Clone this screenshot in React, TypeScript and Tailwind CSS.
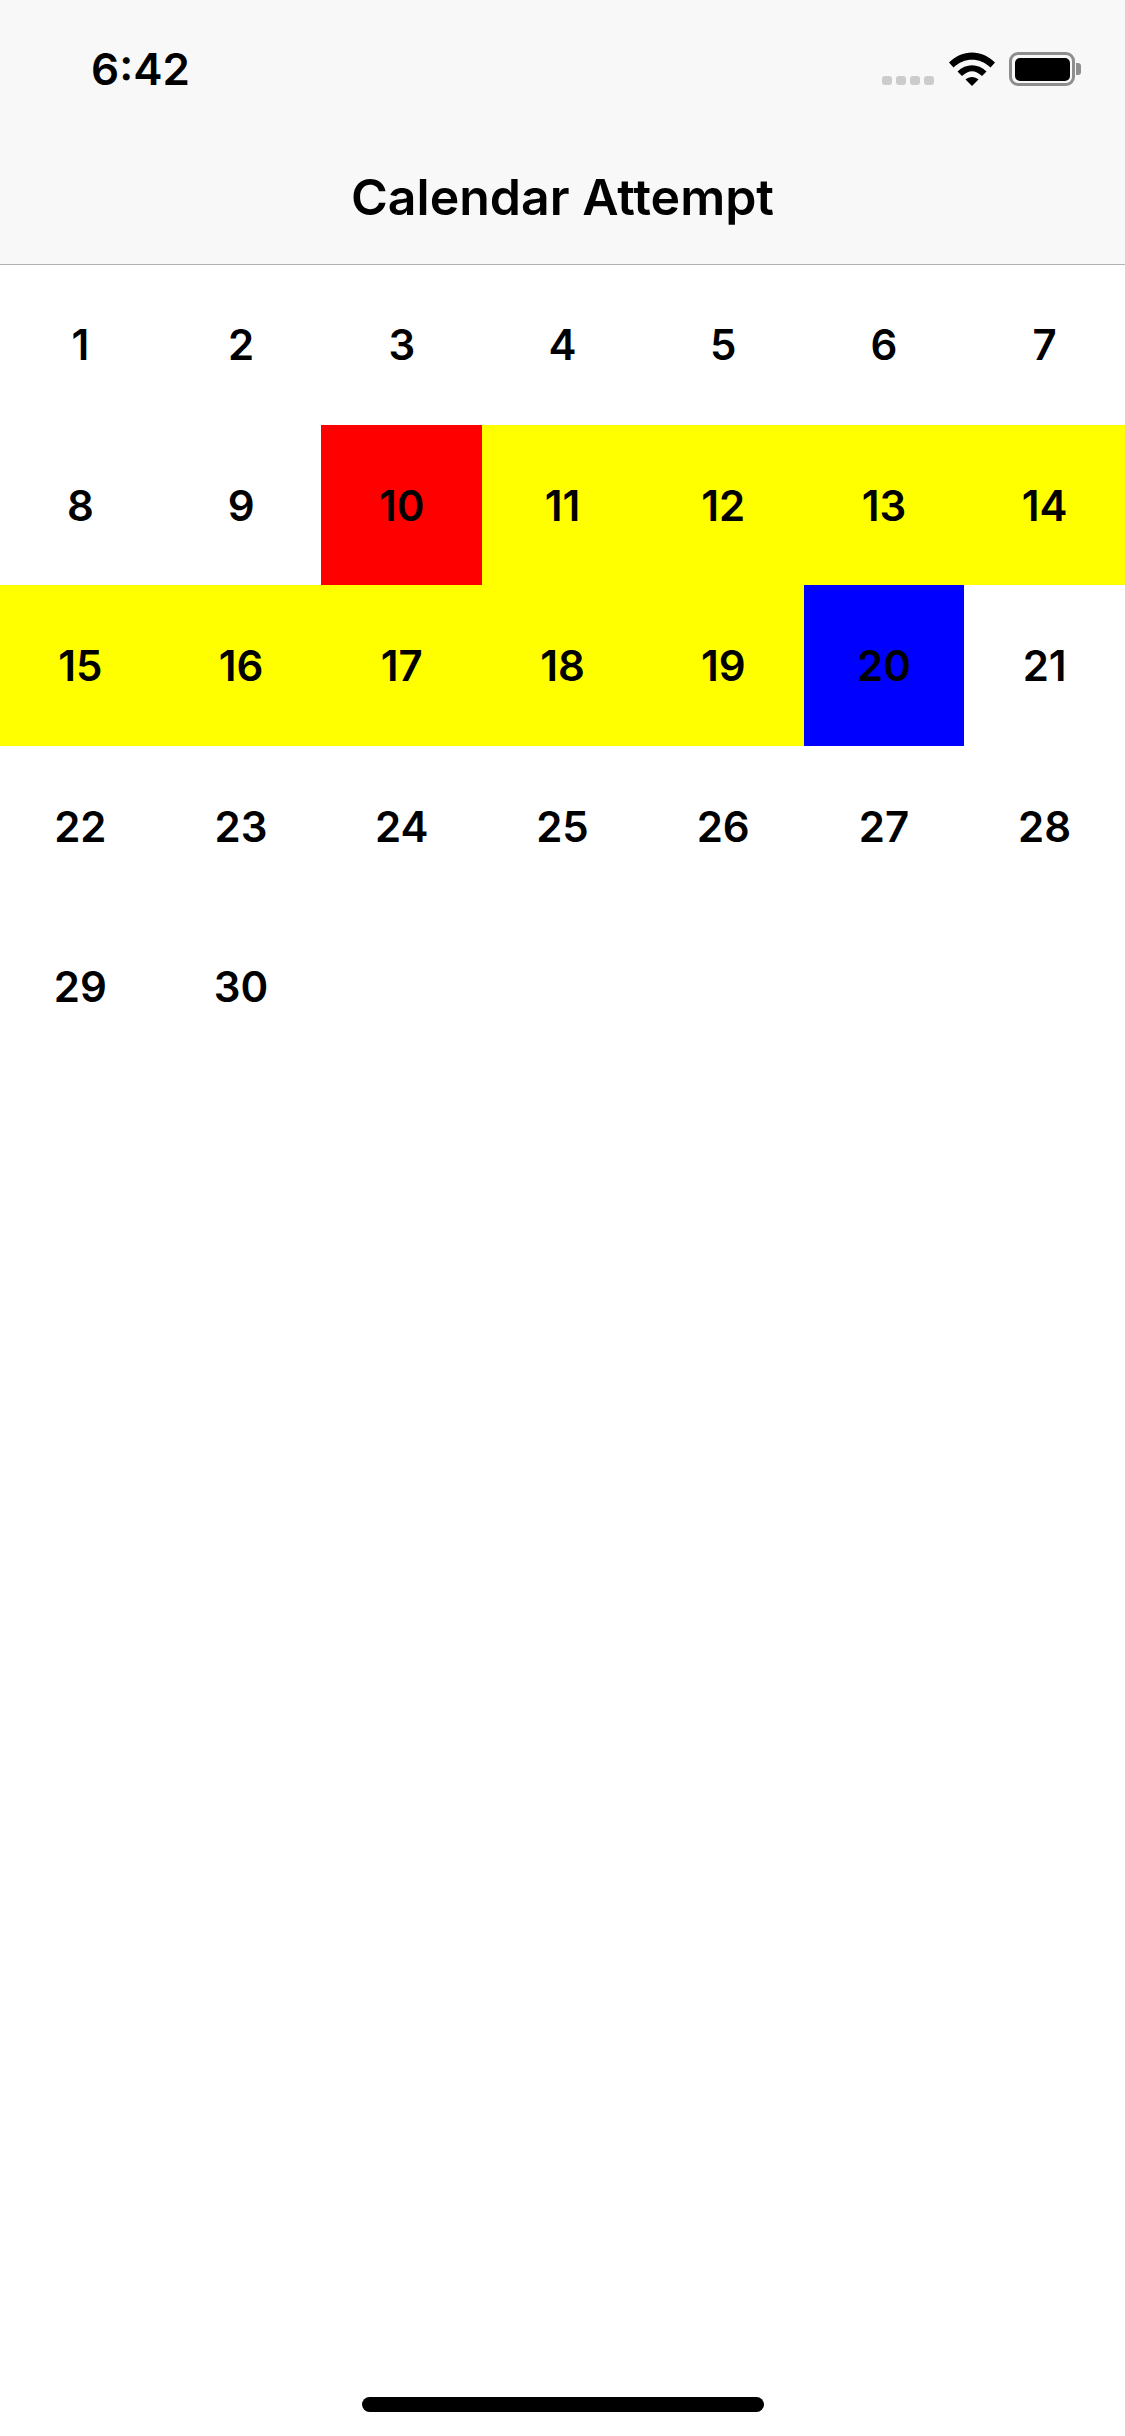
const days = Array.from({ length: 30 }, (_, i) => i + 1);

function dayColor(day: number) {
  if (day === 10) return "bg-[#ff0000]";
  if (day === 20) return "bg-[#0000ff]";
  if (day > 10 && day < 20) return "bg-[#ffff00]";
  return "";
}

function StatusIcons() {
  return (
    <div className="flex items-end">
      <div className="mb-[1px] flex gap-[4px]">
        {[0, 1, 2, 3].map((dot) => (
          <span key={dot} className="h-[9px] w-[10px] rounded-[3px] bg-[#cccccc]" />
        ))}
      </div>
      <svg className="ml-[15px]" width="46" height="34" viewBox="0 0 46 34">
        <path d="M0 10.5 C13 -3 33 -3 46 10.5 L41.5 15.5 C31 5 15 5 4.500 15.500 Z" fill="#000" />
        <path d="M8.500 19.500 C17 11 29 11 37.500 19.500 L33 24 C26 17.500 20 17.500 13 24 Z" fill="#000" />
        <path d="M16.500 27.500 C20 24 26 24 29.500 27.500 L23 34 Z" fill="#000" />
      </svg>
      <div className="ml-[14px] flex items-center">
        <div className="flex h-[34px] w-[66px] items-center justify-center rounded-[9px] border-[3px] border-[#8e8e8e]">
          <div className="h-[23px] w-[55px] rounded-[5px] bg-black" />
        </div>
        <div className="ml-[1px] h-[12px] w-[5px] rounded-r-[3px] bg-[#8e8e8e]" />
      </div>
    </div>
  );
}

export default function App() {
  return (
    <div className="relative flex h-[2436px] w-[1125px] flex-col bg-white font-['Inter','Liberation_Sans',sans-serif] text-black">
      <header className="h-[265px] shrink-0 border-b border-[#b2b2b2] bg-[#f8f8f8]">
        <div className="flex items-center justify-between pl-[91px] pr-[44px] pt-[50px]">
          <span className="text-[44px] font-semibold leading-[38px]">6:42</span>
          <StatusIcons />
        </div>
        <h1 className="mt-[78px] text-center text-[50px] font-semibold leading-[62px]">Calendar Attempt</h1>
      </header>
      <main className="-mt-[0.6px] grid grid-cols-7">
        {days.map((day) => (
          <div
            key={day}
            className={`flex h-[160.500px] items-center justify-center text-[42px] font-semibold ${dayColor(day)}`}
          >
            {day}
          </div>
        ))}
      </main>
      <div className="absolute bottom-[24px] left-[362px] h-[15px] w-[402px] rounded-full bg-black" />
    </div>
  );
}
